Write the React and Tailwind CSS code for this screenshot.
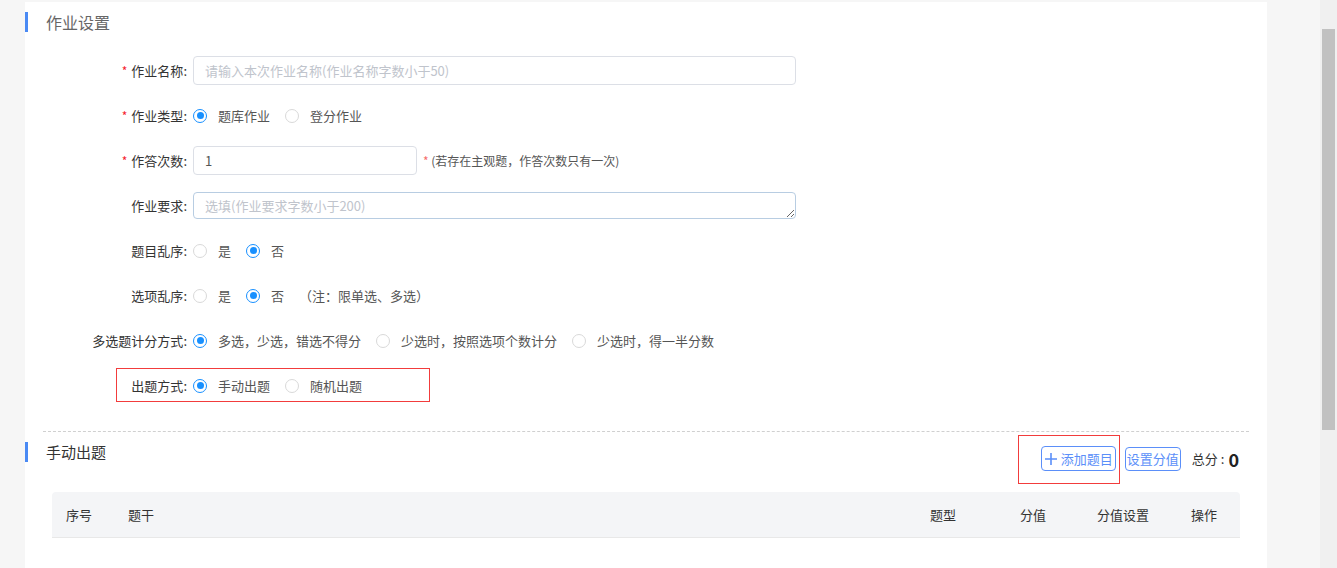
import React from "react";

const FONT = { fontFamily: '"Microsoft YaHei", "Noto Sans CJK SC", "Noto Sans", sans-serif' };

function Radio({ checked }) {
  return checked ? (
    <span className="flex h-[14px] w-[14px] shrink-0 items-center justify-center rounded-full border border-[#1890ff] bg-white">
      <span className="h-[7px] w-[7px] rounded-full bg-[#1890ff]" />
    </span>
  ) : (
    <span className="h-[14px] w-[14px] shrink-0 rounded-full border border-[#d9d9d9] bg-white" />
  );
}

function Option({ checked, children }) {
  return (
    <span className="mr-[15px] flex items-center">
      <Radio checked={checked} />
      <span className="ml-[11px] text-[13px] text-[#555]">{children}</span>
    </span>
  );
}

function Row({ label, required, children, className = "" }) {
  return (
    <div className={"flex h-[45px] items-center " + className}>
      <div className="flex w-[162px] shrink-0 items-center justify-end text-[13px] text-[#333]">
        {required && <span className="mr-[4px] text-[12px] text-[#f5222d]">*</span>}
        <span>{label}:</span>
      </div>
      <div className="ml-[6px] flex items-center">{children}</div>
    </div>
  );
}

export default function App() {
  return (
    <div className="flex h-[568px] w-full overflow-hidden bg-[#f6f6f6]" style={FONT}>
      <div className="flex-1 pl-[25px] pt-[2px]">
        <div className="h-[600px] w-[1242px] bg-white pt-[10px]">
          {/* header 1 */}
          <div className="flex h-[20px] items-center border-l-[3px] border-[#4a8af4] pl-[18px] text-[16px] text-[#666]">
            作业设置
          </div>

          {/* form */}
          <div className="mt-[16px]">
            <Row label="作业名称" required>
              <input
                className="h-[29px] w-[603px] rounded-[4px] border border-[#dcdfe6] px-[11px] text-[13px] text-[#555] outline-none placeholder:text-[#c0c4cc]"
                placeholder="请输入本次作业名称(作业名称字数小于50)"
              />
            </Row>
            <Row label="作业类型" required>
              <Option checked>题库作业</Option>
              <Option>登分作业</Option>
            </Row>
            <Row label="作答次数" required>
              <input
                className="h-[29px] w-[224px] rounded-[4px] border border-[#dcdfe6] px-[11px] text-[13px] text-[#555] outline-none"
                defaultValue="1"
              />
              <span className="ml-[6px] text-[12px] text-[#555]">
                <span className="text-[#f56c6c]">*</span> (若存在主观题，作答次数只有一次)
              </span>
            </Row>
            <Row label="作业要求">
              <textarea
                className="block h-[27px] w-[603px] rounded-[4px] border border-[#b8cde2] px-[11px] py-[4px] text-[13px] leading-[17px] text-[#555] outline-none placeholder:text-[#c0c4cc]"
                placeholder="选填(作业要求字数小于200)"
              />
            </Row>
            <Row label="题目乱序">
              <Option>是</Option>
              <Option checked>否</Option>
            </Row>
            <Row label="选项乱序">
              <Option>是</Option>
              <Option checked>否</Option>
              <span className="text-[13px] text-[#555]">（注：限单选、多选）</span>
            </Row>
            <Row label="多选题计分方式">
              <Option checked>多选，少选，错选不得分</Option>
              <Option>少选时，按照选项个数计分</Option>
              <Option>少选时，得一半分数</Option>
            </Row>
            <div className="relative">
              <Row label="出题方式">
                <Option checked>手动出题</Option>
                <Option>随机出题</Option>
              </Row>
              <div className="pointer-events-none absolute left-[91px] top-[5px] h-[34px] w-[314px] border border-[#f23c3c]" />
            </div>
          </div>

          {/* dashed divider */}
          <div className="mx-[18px] mt-[23px] border-t border-dashed border-[#d0d0d0]" />

          {/* header 2 */}
          <div className="mt-[10px] flex items-start justify-between pr-[28px]">
            <div className="flex h-[20px] items-center border-l-[3px] border-[#4a8af4] pl-[18px] text-[15px] text-[#333]">
              手动出题
            </div>
            <div className="mt-[4px] flex items-center">
              <div className="relative">
                <button className="flex h-[25px] w-[75px] items-center justify-center rounded-[4px] border border-[#5b8ff9] bg-white text-[13px] text-[#5b8ff9]">
                  <svg width="14" height="14" viewBox="0 0 14 14" className="mr-[3px]">
                    <path d="M7 1v12M1 7h12" stroke="#5b8ff9" strokeWidth="1.6" />
                  </svg>
                  添加题目
                </button>
                <div className="pointer-events-none absolute left-[-23px] top-[-11px] h-[49px] w-[102px] border border-[#f23c3c]" />
              </div>
              <button className="ml-[9px] flex h-[24px] w-[56px] items-center justify-center rounded-[4px] border border-[#5b8ff9] bg-white text-[13px] text-[#5b8ff9]">
                设置分值
              </button>
              <span className="ml-[11px] flex items-center text-[13px] text-[#333]">
                总分 :<span className="ml-[4px] text-[18px] font-bold leading-none text-[#222]">0</span>
              </span>
            </div>
          </div>

          {/* table header */}
          <div className="mx-[27px] mt-[21px] flex h-[46px] items-center rounded-t-[4px] border-b border-[#e8e8e8] bg-[#f4f5f7] text-[13px] text-[#333]">
            <div className="w-[76px] pl-[14px]">序号</div>
            <div className="flex-1">题干</div>
            <div className="w-[90px]">题型</div>
            <div className="w-[77px]">分值</div>
            <div className="w-[94px]">分值设置</div>
            <div className="w-[49px]">操作</div>
          </div>
        </div>
      </div>

      {/* fake scrollbar */}
      <div className="relative w-[17px] shrink-0 bg-[#f0f0f0]">
        <div className="absolute left-[2px] top-[29px] h-[401px] w-[13px] bg-[#c1c1c1]" />
      </div>
    </div>
  );
}
